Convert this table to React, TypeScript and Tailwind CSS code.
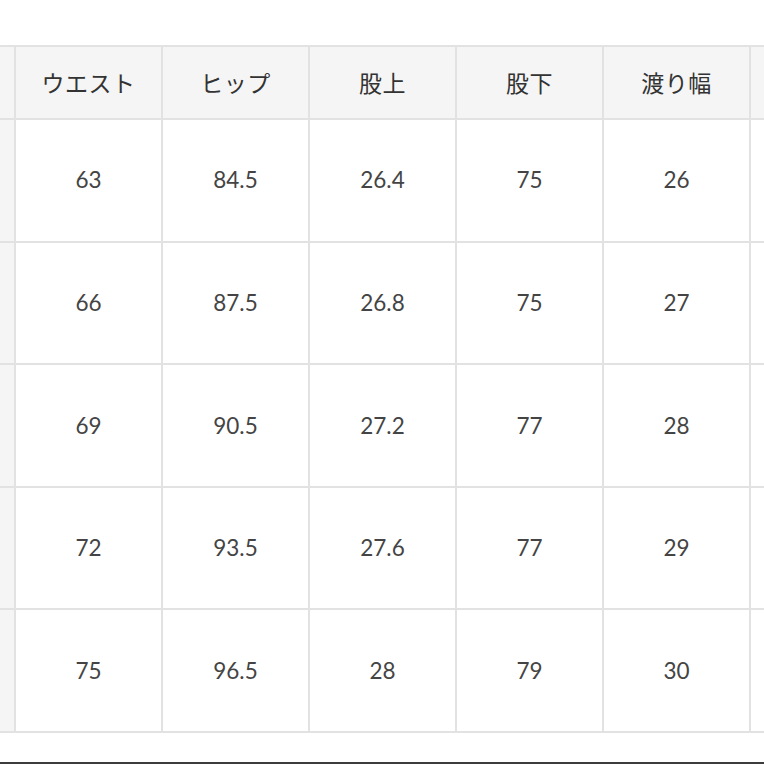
const headers = ["ウエスト", "ヒップ", "股上", "股下", "渡り幅"];

const rows = [
  ["63", "84.5", "26.4", "75", "26"],
  ["66", "87.5", "26.8", "75", "27"],
  ["69", "90.5", "27.2", "77", "28"],
  ["72", "93.5", "27.6", "77", "29"],
  ["75", "96.5", "28", "79", "30"],
];

export default function App() {
  return (
    <div
      className="relative w-[764px] h-[764px] overflow-hidden bg-white text-[#444]"
      style={{ fontFamily: '"Lato", "Noto Sans CJK JP", sans-serif' }}
    >
      <div className="h-[45px]" />
      <div className="bg-[#e2e2e2] py-[2px]">
        <div className="grid grid-cols-[14px_145px_145px_145px_145px_145px_1fr] gap-[2px]">
          {/* header */}
          <div className="h-[71px] bg-[#f5f5f5]" />
          {headers.map((h) => (
            <div
              key={h}
              className="h-[71px] bg-[#f5f5f5] flex items-center justify-center text-[23px] tracking-[0.02em] text-[#333]"
              style={{ fontFamily: '"Noto Sans CJK JP", sans-serif' }}
            >
              {h}
            </div>
          ))}
          <div className="h-[71px] bg-[#f5f5f5]" />

          {rows.map((r, i) => (
            <>
              <div key={"l" + i} className="h-[120.6px] bg-[#f5f5f5]" />
              {r.map((v, j) => (
                <div
                  key={i + "-" + j}
                  className="h-[120.6px] bg-white flex items-center justify-center text-[22.5px]"
                >
                  {v}
                </div>
              ))}
              <div key={"r" + i} className="h-[120.6px] bg-white" />
            </>
          ))}
        </div>
      </div>
      <div className="absolute bottom-0 left-0 w-full h-[2px] bg-[#3c3c3c]" />
    </div>
  );
}
